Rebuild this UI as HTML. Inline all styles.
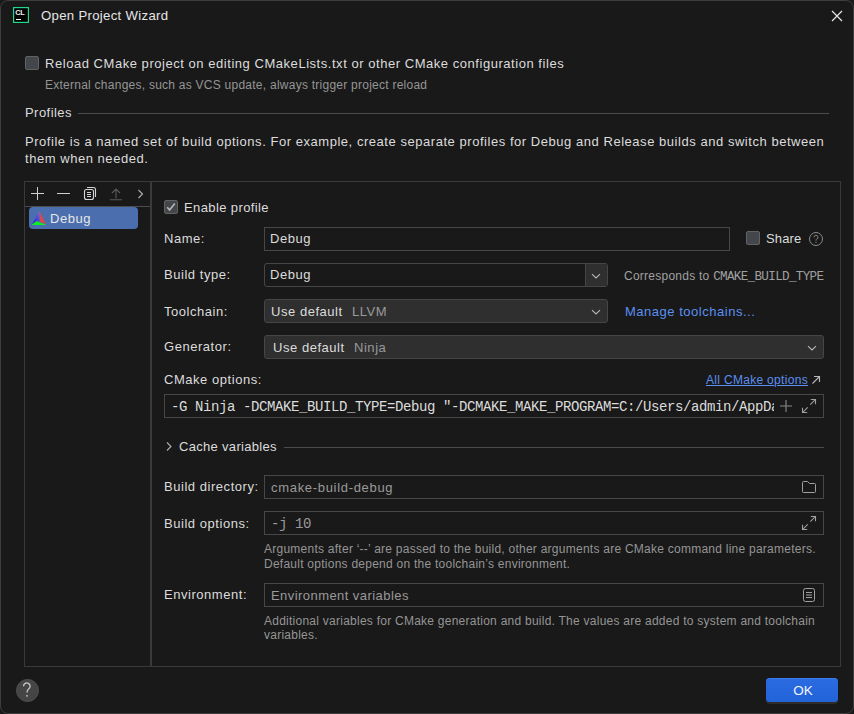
<!DOCTYPE html>
<html><head><meta charset="utf-8">
<style>
html,body{margin:0;padding:0;background:#191919;}
body{width:854px;height:714px;position:relative;overflow:hidden;font-family:"Liberation Sans",sans-serif;color:#dcdcdc;}
#win{position:absolute;left:0;top:0;width:852px;height:712px;border:1px solid #3d3d3d;border-radius:8px;background:#191919;overflow:hidden;}
.a{position:absolute;}
.t{position:absolute;white-space:nowrap;font-size:13px;line-height:16px;letter-spacing:0.54px;color:#dcdcdc;}
.s{position:absolute;white-space:nowrap;font-size:12px;line-height:16px;letter-spacing:0.25px;color:#959595;}
.m{font-family:"Liberation Mono",monospace;letter-spacing:0;}
.hl{position:absolute;height:1px;background:#4c4c4c;}
.vl{position:absolute;width:1px;background:#3a3a3a;}
.fld{position:absolute;box-sizing:border-box;border:1px solid #474747;}
.cmb{position:absolute;box-sizing:border-box;border:1px solid #464646;border-radius:3px;background:#2f2f2f;}
.cb{position:absolute;box-sizing:border-box;width:14px;height:14px;border:1px solid #626262;background:#43464a;border-radius:2px;}
svg{position:absolute;overflow:visible;}
</style></head><body>
<div id="win"></div>
<!-- title -->
<svg style="left:13px;top:7px" width="16" height="16" viewBox="0 0 16 16">
  <rect x="0.6" y="0.6" width="14.8" height="14.8" fill="#000" stroke="#21d789" stroke-width="1.2"/>
  <text x="2.2" y="8.1" font-family="Liberation Sans" font-weight="bold" font-size="7.4" letter-spacing="-0.3" fill="#f0f0f0">CL</text>
  <rect x="3" y="12" width="5" height="1" fill="#fff"/>
</svg>
<div class="t" style="left:41px;top:8px;font-size:13.2px;letter-spacing:0.3px;color:#e6e6e6">Open Project Wizard</div>
<svg style="left:832px;top:11px" width="10" height="10" viewBox="0 0 10 10"><path d="M0 0L10 10M10 0L0 10" stroke="#e8e8e8" stroke-width="1.2"/></svg>

<!-- reload -->
<div class="cb" style="left:25px;top:56px"></div>
<div class="t" style="left:45px;top:56px">Reload CMake project on editing CMakeLists.txt or other CMake configuration files</div>
<div class="s" style="left:45px;top:77px">External changes, such as VCS update, always trigger project reload</div>

<div class="t" style="left:25px;top:105px;letter-spacing:0.45px">Profiles</div>
<div class="hl" style="left:78px;top:113px;width:751px"></div>
<div class="t" style="left:25px;top:134px">Profile is a named set of build options. For example, create separate profiles for Debug and Release builds and switch between</div>
<div class="t" style="left:25px;top:151px">them when needed.</div>

<!-- outer box -->
<div class="a" style="left:24px;top:181px;width:815px;height:484px;border:1px solid #3a3a3a;"></div>
<div class="a" style="left:150px;top:182px;width:2px;height:484px;background:#3a3a3a"></div>
<div class="hl" style="left:25px;top:206px;width:125px"></div>
<!-- toolbar icons -->
<svg style="left:31px;top:187px" width="14" height="14" viewBox="0 0 14 14"><path d="M0 6.5H13M6.5 0V13" stroke="#d0d0d0" stroke-width="1"/></svg>
<svg style="left:57px;top:187px" width="14" height="14" viewBox="0 0 14 14"><path d="M0 6.5H13" stroke="#d0d0d0" stroke-width="1"/></svg>
<svg style="left:83px;top:186px" width="14" height="14" viewBox="0 0 14 14">
  <path d="M4 1.5H10.5A2 2 0 0 1 12.5 3.5V11" fill="none" stroke="#d4d4d8" stroke-width="1.1"/>
  <rect x="1.5" y="3.5" width="9" height="10" rx="2" fill="none" stroke="#d4d4d8" stroke-width="1.1"/>
  <path d="M4 6.5H8M4 8.5H8M4 10.5H8" stroke="#d4d4d8" stroke-width="1"/>
</svg>
<svg style="left:109px;top:187px" width="14" height="14" viewBox="0 0 14 14"><path d="M7 2V11.5M3 6L7 2L11 6M0.8 12.8H13" fill="none" stroke="#5a5a5a" stroke-width="1.1"/></svg>
<svg style="left:137px;top:189px" width="8" height="10" viewBox="0 0 8 10"><path d="M1.5 1L5.5 5L1.5 9" fill="none" stroke="#b0b0b0" stroke-width="1.1"/></svg>

<div class="a" style="left:29px;top:207px;width:109px;height:22px;background:#4b6eaf;border-radius:4px"></div>
<svg style="left:32px;top:211px" width="14" height="14" viewBox="0 0 14 14">
  <defs><linearGradient id="bl" x1="0.8" y1="0" x2="0.1" y2="1"><stop offset="0" stop-color="#6a6aee"/><stop offset="1" stop-color="#1a22c0"/></linearGradient></defs>
  <path d="M7.2 0L0 13.4L4.8 10L7.6 10.6Z" fill="url(#bl)"/>
  <path d="M7.4 0L7.9 10.4L14 13.6Z" fill="#de4848"/>
  <path d="M0 13.6L4.6 10.2L14 13.8L14 14L0 14Z" fill="#10f020"/>
</svg>
<div class="t" style="left:50px;top:211px;color:#e6e6e6">Debug</div>

<!-- right panel -->
<div class="cb" style="left:164px;top:200px"></div>
<svg style="left:164px;top:200px" width="14" height="14" viewBox="0 0 14 14"><path d="M3.2 7.2L5.6 10L10.8 3.5" fill="none" stroke="#b8b8b8" stroke-width="1.6"/></svg>
<div class="t" style="left:184px;top:200px;letter-spacing:0.39px">Enable profile</div>

<div class="t" style="left:164px;top:231px">Name:</div>
<div class="fld" style="left:264px;top:227px;width:466px;height:24px"></div>
<div class="t" style="left:270px;top:231px">Debug</div>
<div class="cb" style="left:746px;top:231px"></div>
<div class="t" style="left:766px;top:231px;letter-spacing:0.15px">Share</div>
<svg style="left:809px;top:232px" width="14" height="14" viewBox="0 0 14 14">
  <circle cx="7" cy="7" r="6.5" fill="none" stroke="#8a8a8a" stroke-width="1"/>
  <path d="M5 5.3A2 2 0 1 1 7.6 7.2C7.1 7.5 7 7.8 7 8.6" fill="none" stroke="#8a8a8a" stroke-width="1"/>
  <circle cx="7" cy="10.4" r="0.6" fill="#8a8a8a"/>
</svg>

<div class="t" style="left:164px;top:267px">Build type:</div>
<div class="cmb" style="left:264px;top:263px;width:344px;height:24px;background:#191919"></div>
<div class="a" style="left:585px;top:264px;width:22px;height:22px;background:#2f2f2f;border-left:1px solid #464646;border-radius:0 2px 2px 0;box-sizing:border-box"></div>
<svg style="left:592px;top:274px" width="8" height="4" viewBox="0 0 8 4"><path d="M0 0.2L4 4L8 0.2" fill="none" stroke="#bababa" stroke-width="1.1"/></svg>
<div class="t" style="left:270px;top:267px">Debug</div>
<div class="s" style="left:624px;top:268px;color:#a0a0a0">Corresponds to <span class="m" style="font-size:12.6px;letter-spacing:-0.67px">CMAKE_BUILD_TYPE</span></div>

<div class="t" style="left:164px;top:304px">Toolchain:</div>
<div class="cmb" style="left:264px;top:299px;width:344px;height:24px"></div>
<svg style="left:592px;top:310px" width="8" height="4" viewBox="0 0 8 4"><path d="M0 0.2L4 4L8 0.2" fill="none" stroke="#bababa" stroke-width="1.1"/></svg>
<div class="t" style="left:271px;top:304px">Use default&nbsp; <span style="color:#9a9a9a;margin-left:1px">LLVM</span></div>
<div class="t" style="left:625px;top:304px;color:#5c90f2;letter-spacing:0.52px">Manage toolchains...</div>

<div class="t" style="left:164px;top:339px">Generator:</div>
<div class="cmb" style="left:264px;top:335px;width:560px;height:24px"></div>
<svg style="left:808px;top:346px" width="8" height="4" viewBox="0 0 8 4"><path d="M0 0.2L4 4L8 0.2" fill="none" stroke="#bababa" stroke-width="1.1"/></svg>
<div class="t" style="left:273px;top:340px">Use default&nbsp; <span style="color:#9a9a9a;margin-left:1px">Ninja</span></div>

<div class="t" style="left:164px;top:372px">CMake options:</div>
<div class="s" style="left:706px;top:372px;color:#5b8ff0;letter-spacing:0.31px;text-decoration:underline">All CMake options</div>
<svg style="left:812px;top:376px" width="8" height="8" viewBox="0 0 8 8"><path d="M0.5 7.5L7.5 0.5M2 0.5H7.5V6" fill="none" stroke="#b8b8b8" stroke-width="1.1"/></svg>
<div class="fld" style="left:164px;top:394px;width:660px;height:24px"></div>
<div class="t m" style="left:171px;top:399px;font-size:14px;letter-spacing:-0.4px;width:603px;overflow:hidden">-G Ninja -DCMAKE_BUILD_TYPE=Debug "-DCMAKE_MAKE_PROGRAM=C:/Users/admin/AppData/Local/Programs</div>
<svg style="left:780px;top:400px" width="12" height="12" viewBox="0 0 12 12"><path d="M0 6H12M6 0V12" stroke="#8a8a8a" stroke-width="1.1"/></svg>
<svg style="left:802px;top:399px" width="14" height="14" viewBox="0 0 14 14"><path d="M8.8 0.5H13.5V5.2M5.2 13.5H0.5V8.8" fill="none" stroke="#a0a0a0" stroke-width="1.1"/><path d="M13.3 0.7L8.3 5.7M0.7 13.3L5.7 8.3" stroke="#a0a0a0" stroke-width="1.05"/></svg>

<svg style="left:166px;top:442px" width="6" height="9" viewBox="0 0 6 9"><path d="M1 0.5L5 4.5L1 8.5" fill="none" stroke="#b0b0b0" stroke-width="1.1"/></svg>
<div class="t" style="left:179px;top:439px;letter-spacing:0.31px">Cache variables</div>
<div class="hl" style="left:284px;top:447px;width:540px"></div>

<div class="t" style="left:164px;top:479px">Build directory:</div>
<div class="fld" style="left:264px;top:475px;width:560px;height:24px"></div>
<div class="t" style="left:271px;top:480px;color:#9a9a9a;letter-spacing:0.69px">cmake-build-debug</div>
<svg style="left:802px;top:481px" width="14" height="12" viewBox="0 0 14 12"><path d="M1.5 0.5H5.5L7.5 2.5H12.5A1 1 0 0 1 13.5 3.5V10.5A1 1 0 0 1 12.5 11.5H1.5A1 1 0 0 1 0.5 10.5V1.5A1 1 0 0 1 1.5 0.5Z" fill="none" stroke="#a0a0a0" stroke-width="1"/></svg>

<div class="t" style="left:164px;top:516px">Build options:</div>
<div class="fld" style="left:264px;top:511px;width:560px;height:24px"></div>
<div class="t m" style="left:271px;top:516px;font-size:14px;letter-spacing:-0.4px;color:#9a9a9a">-j 10</div>
<svg style="left:802px;top:516px" width="14" height="14" viewBox="0 0 14 14"><path d="M8.8 0.5H13.5V5.2M5.2 13.5H0.5V8.8" fill="none" stroke="#a0a0a0" stroke-width="1.1"/><path d="M13.3 0.7L8.3 5.7M0.7 13.3L5.7 8.3" stroke="#a0a0a0" stroke-width="1.05"/></svg>
<div class="s" style="left:264px;top:541px">Arguments after ‘--’ are passed to the build, other arguments are CMake command line parameters.</div>
<div class="s" style="left:264px;top:556px">Default options depend on the toolchain’s environment.</div>

<div class="t" style="left:164px;top:587px">Environment:</div>
<div class="fld" style="left:264px;top:583px;width:560px;height:24px"></div>
<div class="t" style="left:271px;top:588px;color:#9a9a9a;letter-spacing:0.44px">Environment variables</div>
<svg style="left:803px;top:588px" width="12" height="14" viewBox="0 0 12 14">
  <rect x="0.5" y="0.5" width="11" height="13" rx="2" fill="none" stroke="#a0a0a0" stroke-width="1"/>
  <path d="M3 4.5H9M3 7H9M3 9.5H9" stroke="#a0a0a0" stroke-width="1"/>
</svg>
<div class="s" style="left:264px;top:613px">Additional variables for CMake generation and build. The values are added to system and toolchain</div>
<div class="s" style="left:264px;top:627px">variables.</div>

<!-- bottom -->
<div class="a" style="left:16px;top:679px;width:23px;height:23px;border-radius:50%;background:#454545;box-sizing:border-box;border:1px solid #505050"></div>
<svg style="left:22px;top:682px" width="10" height="16" viewBox="0 0 10 16">
  <path d="M1.5 4.2A3.3 3.3 0 1 1 6.6 7C5.6 7.7 5 8.3 5 10.6" fill="none" stroke="#c8c8c8" stroke-width="1.3"/>
  <circle cx="5" cy="13.8" r="0.9" fill="#c8c8c8"/>
</svg>
<div class="a" style="left:766px;top:680px;width:72px;height:24px;border-radius:4px;background:#2f2d2a"></div>
<div class="a" style="left:766px;top:678px;width:72px;height:24px;border-radius:3.5px;background:linear-gradient(#2a6be2,#2363d8);box-sizing:border-box;border-top:1px solid #3b7bee"></div>
<div class="t" style="left:767px;top:683px;width:72px;text-align:center;letter-spacing:0;font-size:13.5px;color:#f4f6fc">OK</div>
</body></html>
